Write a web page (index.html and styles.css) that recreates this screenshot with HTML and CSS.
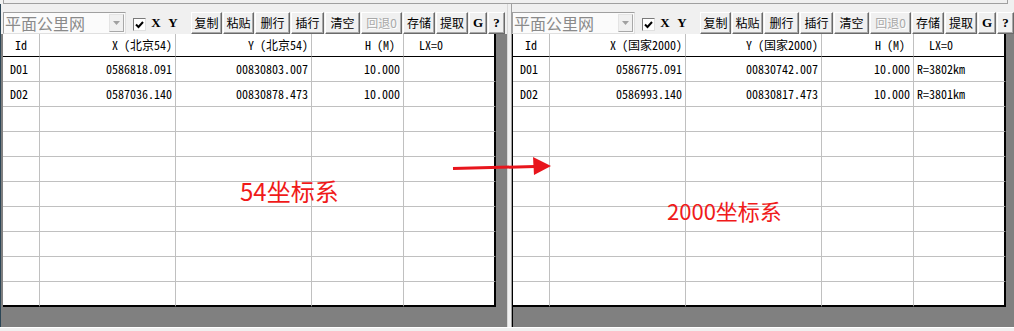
FILE: index.html
```html
<!DOCTYPE html>
<html lang="zh-CN">
<head>
    <meta charset="UTF-8">
    <title>坐标转换</title>
    <link rel="stylesheet" href="styles.css">
</head>
<body>
<div class="screen">
    <div class="top"><div class="top-edit"></div></div>

    <div class="panes">
        <!-- 左：北京54 -->
        <section class="pane pane-left">
            <div class="toolbar">
                <div class="combo">
                    <span class="combo-text">平面公里网</span>
                    <span class="combo-btn"><svg width="7" height="4" viewBox="0 0 7 4"><path d="M0 0h7L3.5 4z" fill="#a0a0a0"/></svg></span>
                </div>
                <span class="check"><svg width="9" height="8" viewBox="0 0 9 8"><path d="M1 3.5l2.5 2.5L8 1" fill="none" stroke="#000" stroke-width="2"/></svg></span>
                <span class="axis axis-x">X</span>
                <span class="axis axis-y">Y</span>
                <div class="buttons">
                    <button class="btn w31">复制</button>
                    <button class="btn w31">粘贴</button>
                    <button class="btn w35">删行</button>
                    <button class="btn w33">插行</button>
                    <button class="btn w35">清空</button>
                    <button class="btn w41" disabled>回退0</button>
                    <button class="btn w32">存储</button>
                    <button class="btn w32">提取</button>
                    <button class="btn w18 bold">G</button>
                    <button class="btn w17 bold">?</button>
                </div>
            </div>
            <div class="grid-area">
                <div class="grid">
                    <div class="row head">
                        <div class="c c-id center">Id</div>
                        <div class="c c-x right">X (北京54)</div>
                        <div class="c c-y right">Y (北京54)</div>
                        <div class="c c-h right pad-h">H (M)</div>
                        <div class="c c-lx lx-head">LX=0</div>
                    </div>
                    <div class="row">
                        <div class="c c-id">D01</div>
                        <div class="c c-x right">0586818.091</div>
                        <div class="c c-y right">00830803.007</div>
                        <div class="c c-h right">10.000</div>
                        <div class="c c-lx"></div>
                    </div>
                    <div class="row">
                        <div class="c c-id">D02</div>
                        <div class="c c-x right">0587036.140</div>
                        <div class="c c-y right">00830878.473</div>
                        <div class="c c-h right">10.000</div>
                        <div class="c c-lx"></div>
                    </div>
                    <div class="row"><div class="c c-id"></div><div class="c c-x"></div><div class="c c-y"></div><div class="c c-h"></div><div class="c c-lx"></div></div>
                    <div class="row"><div class="c c-id"></div><div class="c c-x"></div><div class="c c-y"></div><div class="c c-h"></div><div class="c c-lx"></div></div>
                    <div class="row"><div class="c c-id"></div><div class="c c-x"></div><div class="c c-y"></div><div class="c c-h"></div><div class="c c-lx"></div></div>
                    <div class="row"><div class="c c-id"></div><div class="c c-x"></div><div class="c c-y"></div><div class="c c-h"></div><div class="c c-lx"></div></div>
                    <div class="row"><div class="c c-id"></div><div class="c c-x"></div><div class="c c-y"></div><div class="c c-h"></div><div class="c c-lx"></div></div>
                    <div class="row"><div class="c c-id"></div><div class="c c-x"></div><div class="c c-y"></div><div class="c c-h"></div><div class="c c-lx"></div></div>
                    <div class="row"><div class="c c-id"></div><div class="c c-x"></div><div class="c c-y"></div><div class="c c-h"></div><div class="c c-lx"></div></div>
                    <div class="row last"><div class="c c-id"></div><div class="c c-x"></div><div class="c c-y"></div><div class="c c-h"></div><div class="c c-lx"></div></div>
                </div>
            </div>
        </section>

        <div class="splitter"></div>

        <!-- 右：国家2000 -->
        <section class="pane pane-right">
            <div class="toolbar">
                <div class="combo">
                    <span class="combo-text">平面公里网</span>
                    <span class="combo-btn"><svg width="7" height="4" viewBox="0 0 7 4"><path d="M0 0h7L3.5 4z" fill="#a0a0a0"/></svg></span>
                </div>
                <span class="check"><svg width="9" height="8" viewBox="0 0 9 8"><path d="M1 3.5l2.5 2.5L8 1" fill="none" stroke="#000" stroke-width="2"/></svg></span>
                <span class="axis axis-x">X</span>
                <span class="axis axis-y">Y</span>
                <div class="buttons">
                    <button class="btn w31">复制</button>
                    <button class="btn w31">粘贴</button>
                    <button class="btn w35">删行</button>
                    <button class="btn w33">插行</button>
                    <button class="btn w35">清空</button>
                    <button class="btn w41" disabled>回退0</button>
                    <button class="btn w32">存储</button>
                    <button class="btn w32">提取</button>
                    <button class="btn w18 bold">G</button>
                    <button class="btn w17 bold">?</button>
                </div>
            </div>
            <div class="grid-area">
                <div class="grid">
                    <div class="row head">
                        <div class="c c-id center">Id</div>
                        <div class="c c-x right">X (国家2000)</div>
                        <div class="c c-y right">Y (国家2000)</div>
                        <div class="c c-h right pad-h">H (M)</div>
                        <div class="c c-lx lx-head">LX=0</div>
                    </div>
                    <div class="row">
                        <div class="c c-id">D01</div>
                        <div class="c c-x right">0586775.091</div>
                        <div class="c c-y right">00830742.007</div>
                        <div class="c c-h right">10.000</div>
                        <div class="c c-lx">R=3802km</div>
                    </div>
                    <div class="row">
                        <div class="c c-id">D02</div>
                        <div class="c c-x right">0586993.140</div>
                        <div class="c c-y right">00830817.473</div>
                        <div class="c c-h right">10.000</div>
                        <div class="c c-lx">R=3801km</div>
                    </div>
                    <div class="row"><div class="c c-id"></div><div class="c c-x"></div><div class="c c-y"></div><div class="c c-h"></div><div class="c c-lx"></div></div>
                    <div class="row"><div class="c c-id"></div><div class="c c-x"></div><div class="c c-y"></div><div class="c c-h"></div><div class="c c-lx"></div></div>
                    <div class="row"><div class="c c-id"></div><div class="c c-x"></div><div class="c c-y"></div><div class="c c-h"></div><div class="c c-lx"></div></div>
                    <div class="row"><div class="c c-id"></div><div class="c c-x"></div><div class="c c-y"></div><div class="c c-h"></div><div class="c c-lx"></div></div>
                    <div class="row"><div class="c c-id"></div><div class="c c-x"></div><div class="c c-y"></div><div class="c c-h"></div><div class="c c-lx"></div></div>
                    <div class="row"><div class="c c-id"></div><div class="c c-x"></div><div class="c c-y"></div><div class="c c-h"></div><div class="c c-lx"></div></div>
                    <div class="row"><div class="c c-id"></div><div class="c c-x"></div><div class="c c-y"></div><div class="c c-h"></div><div class="c c-lx"></div></div>
                    <div class="row last"><div class="c c-id"></div><div class="c c-x"></div><div class="c c-y"></div><div class="c c-h"></div><div class="c c-lx"></div></div>
                </div>
            </div>
        </section>
    </div>

    <div class="bottom"></div>

    <!-- 标注 -->
    <div class="note note-54">54坐标系</div>
    <div class="note note-2000">2000坐标系</div>
    <svg class="arrow" width="102" height="24" viewBox="0 0 102 24">
        <path d="M1 13.5L83 11.5" stroke="#e8151c" stroke-width="3" fill="none"/>
        <path d="M81 2L99 11L82 20z" fill="#e8151c"/>
    </svg>
</div>
</body>
</html>
```

FILE: styles.css
```css
:root {
    --face: #f0f0f0;
    --dark-bg: #808080;
    --line: #c0c0c0;
    --red: #e8151c;
    --cell-font: "Noto Sans Mono CJK SC", "DejaVu Sans Mono", "Noto Sans CJK SC", monospace;
}

* {
    box-sizing: border-box;
}

body {
    margin: 0;
    background: var(--face);
    font-family: "Noto Sans CJK SC", "Liberation Sans", sans-serif;
}

.screen {
    position: relative;
    width: 1014px;
    height: 331px;
    overflow: hidden;
}

.top {
    height: 4px;
    padding: 0 6px 0 3px;
}

.top-edit {
    height: 4px;
    border: 1px solid #a0a0a0;
    border-top: none;
}

.panes {
    display: flex;
    height: 323px;
}

.pane {
    display: flex;
    flex-direction: column;
}

.pane-left {
    width: 507px;
    border-left: 1px solid #2c4656;
}

.pane-right {
    flex: 1;
}

.splitter {
    width: 5px;
    background: var(--face);
    border-left: 1px solid #d8d8d8;
    border-right: 1px solid #a0a0a0;
}

/* toolbar */
.toolbar {
    height: 30px;
    display: flex;
    align-items: flex-start;
    padding-top: 8px;
}

.toolbar > * {
    flex-shrink: 0;
}

.pane-left .toolbar {
    padding-left: 2px;
}

.combo {
    width: 123px;
    height: 22px;
    display: flex;
    align-items: center;
    justify-content: space-between;
    border: 1px solid #a0a0a0;
    border-right-color: #e0e0e0;
    border-bottom-color: #e0e0e0;
    background: #fbfbfb;
    padding: 0 1px 0 1px;
}

.combo-text {
    font-size: 16px;
    line-height: 20px;
    color: #8a8a8a;
}

.combo-btn {
    width: 15px;
    height: 18px;
    display: flex;
    align-items: center;
    justify-content: center;
    background: var(--face);
    border: 1px solid #e4e4e4;
    border-right-color: #a8a8a8;
    border-bottom-color: #a8a8a8;
}

.check {
    width: 13px;
    height: 13px;
    margin: 6px 0 0 7px;
    display: flex;
    align-items: center;
    justify-content: center;
    background: #fff;
    border: 1px solid #7a7a7a;
    border-right-color: #e0e0e0;
    border-bottom-color: #e0e0e0;
}

.axis {
    font-family: "Liberation Serif", serif;
    font-weight: bold;
    font-size: 13px;
    line-height: 22px;
    width: 12px;
    text-align: center;
}

.axis-x {
    margin-left: 4px;
}

.axis-y {
    margin-left: 5px;
}

.buttons {
    display: flex;
    gap: 1px;
    margin-left: 12px;
}

.btn {
    height: 22px;
    padding: 0;
    font-family: "Noto Sans CJK SC", sans-serif;
    font-size: 12px;
    line-height: 18px;
    color: #000;
    background: var(--face);
    border: 1px solid;
    border-color: #fff #6a6a6a #6a6a6a #fff;
    box-shadow: inset -1px -1px #a8a8a8;
}

.btn:disabled {
    color: #a8a8a8;
    text-shadow: 1px 1px #fff;
}

.btn.bold {
    font-family: "Liberation Serif", serif;
    font-weight: bold;
    font-size: 13px;
}

.w17 { width: 17px; }
.w18 { width: 18px; }
.w31 { width: 31px; }
.w32 { width: 32px; }
.w33 { width: 33px; }
.w35 { width: 35px; }
.w41 { width: 41px; }

/* grid */
.grid-area {
    flex: 1;
    background: var(--dark-bg);
}

.pane-left .grid-area {
    padding-left: 2px;
}

.pane-right .grid-area {
    border-left: 1px solid #000;
}

.grid {
    width: 493px;
    background: #fff;
}

.row {
    display: flex;
    height: 25px;
}

.row.head {
    height: 23px;
}

.c {
    height: 100%;
    border-right: 1px solid var(--line);
    border-bottom: 1px solid var(--line);
    font-family: var(--cell-font);
    font-size: 12px;
    line-height: 24px;
    color: #000;
    padding: 0 3px 0 7px;
    white-space: nowrap;
    overflow: hidden;
}

.head .c {
    border-bottom: 1px solid #000;
    line-height: 22px;
}

.row.last .c {
    border-bottom: 2px solid #000;
}

.c-id { width: 37px; }
.c-x { width: 136px; }
.c-y { width: 136px; }
.c-h { width: 92px; }
.c-lx {
    width: 92px;
    border-right: 2px solid #000;
    padding-left: 3px;
}

.center {
    text-align: center;
    padding: 0;
}

.right {
    text-align: right;
}

.pad-h {
    padding-right: 8px;
}

.lx-head {
    padding-left: 15px;
}

.bottom {
    height: 4px;
    border-top: 1px solid #fff;
}

/* annotations over the grids */
.note {
    position: absolute;
    font-family: "Noto Sans CJK SC", sans-serif;
    font-size: 22px;
    line-height: 28px;
    color: #f01a1a;
}

.note-54 {
    left: 240px;
    top: 177px;
    font-size: 24px;
}

.note-2000 {
    left: 667px;
    top: 196px;
}

.arrow {
    position: absolute;
    left: 452px;
    top: 155px;
}
```
